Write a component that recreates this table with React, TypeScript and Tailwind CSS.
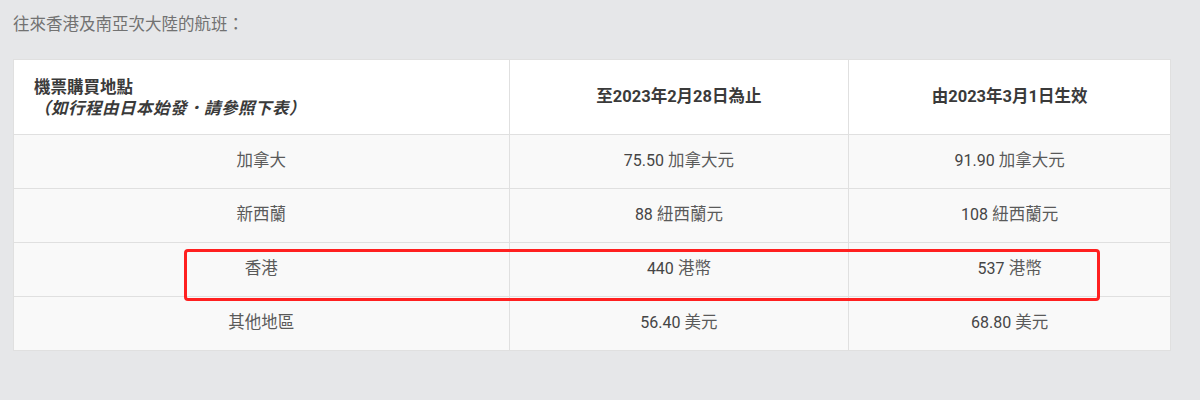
const rows = [
  { place: "加拿大", before: ["75.50", "加拿大元"], after: ["91.90", "加拿大元"] },
  { place: "新西蘭", before: ["88", "紐西蘭元"], after: ["108", "紐西蘭元"] },
  { place: "香港", before: ["440", "港幣"], after: ["537", "港幣"] },
  { place: "其他地區", before: ["56.40", "美元"], after: ["68.80", "美元"] },
];

function Price({ value }: { value: string[] }) {
  return (
    <>
      <span className="text-[16px] text-[#454545]">{value[0]}</span> {value[1]}
    </>
  );
}

export default function App() {
  return (
    <div className="relative w-[1200px] h-[400px] bg-[#e6e7e9] pl-[13px] pr-[29px] pt-[12px] font-['Roboto','Noto_Sans_CJK_TC',sans-serif]">
      <p className="text-[16.5px] leading-[26px] text-[#727272]">往來香港及南亞次大陸的航班：</p>

      <table className="mt-[21px] w-[1158px] border-collapse border border-[#dcdcdc] text-[16.5px] text-[#5a5a5a]">
        <colgroup>
          <col className="w-[496px]" />
          <col className="w-[340px]" />
          <col className="w-[322px]" />
        </colgroup>
        <thead>
          <tr className="h-[75px] bg-white">
            <th className="border border-[#e0e0e0] pl-[20px] pt-[2px] text-left align-middle font-bold text-[#3a3a3a] leading-[21px]">
              <div>機票購買地點</div>
              <div className="italic tracking-[0.5px]">（如行程由日本始發．請參照下表）</div>
            </th>
            <th className="border border-[#e0e0e0] text-center font-bold text-[#3a3a3a]">至2023年2月28日為止</th>
            <th className="border border-[#e0e0e0] text-center font-bold text-[#3a3a3a]">由2023年3月1日生效</th>
          </tr>
        </thead>
        <tbody>
          {rows.map((r) => (
            <tr key={r.place} className="h-[54px] bg-[#f9f9f9]">
              <td className="border border-[#e0e0e0] text-center">{r.place}</td>
              <td className="border border-[#e0e0e0] text-center">
                <Price value={r.before} />
              </td>
              <td className="border border-[#e0e0e0] text-center">
                <Price value={r.after} />
              </td>
            </tr>
          ))}
        </tbody>
      </table>

      {/* annotation box */}
      <div className="absolute left-[184px] top-[249px] w-[916px] h-[52px] rounded-[4px] border-[3px] border-[#ff2020]" />
    </div>
  );
}
